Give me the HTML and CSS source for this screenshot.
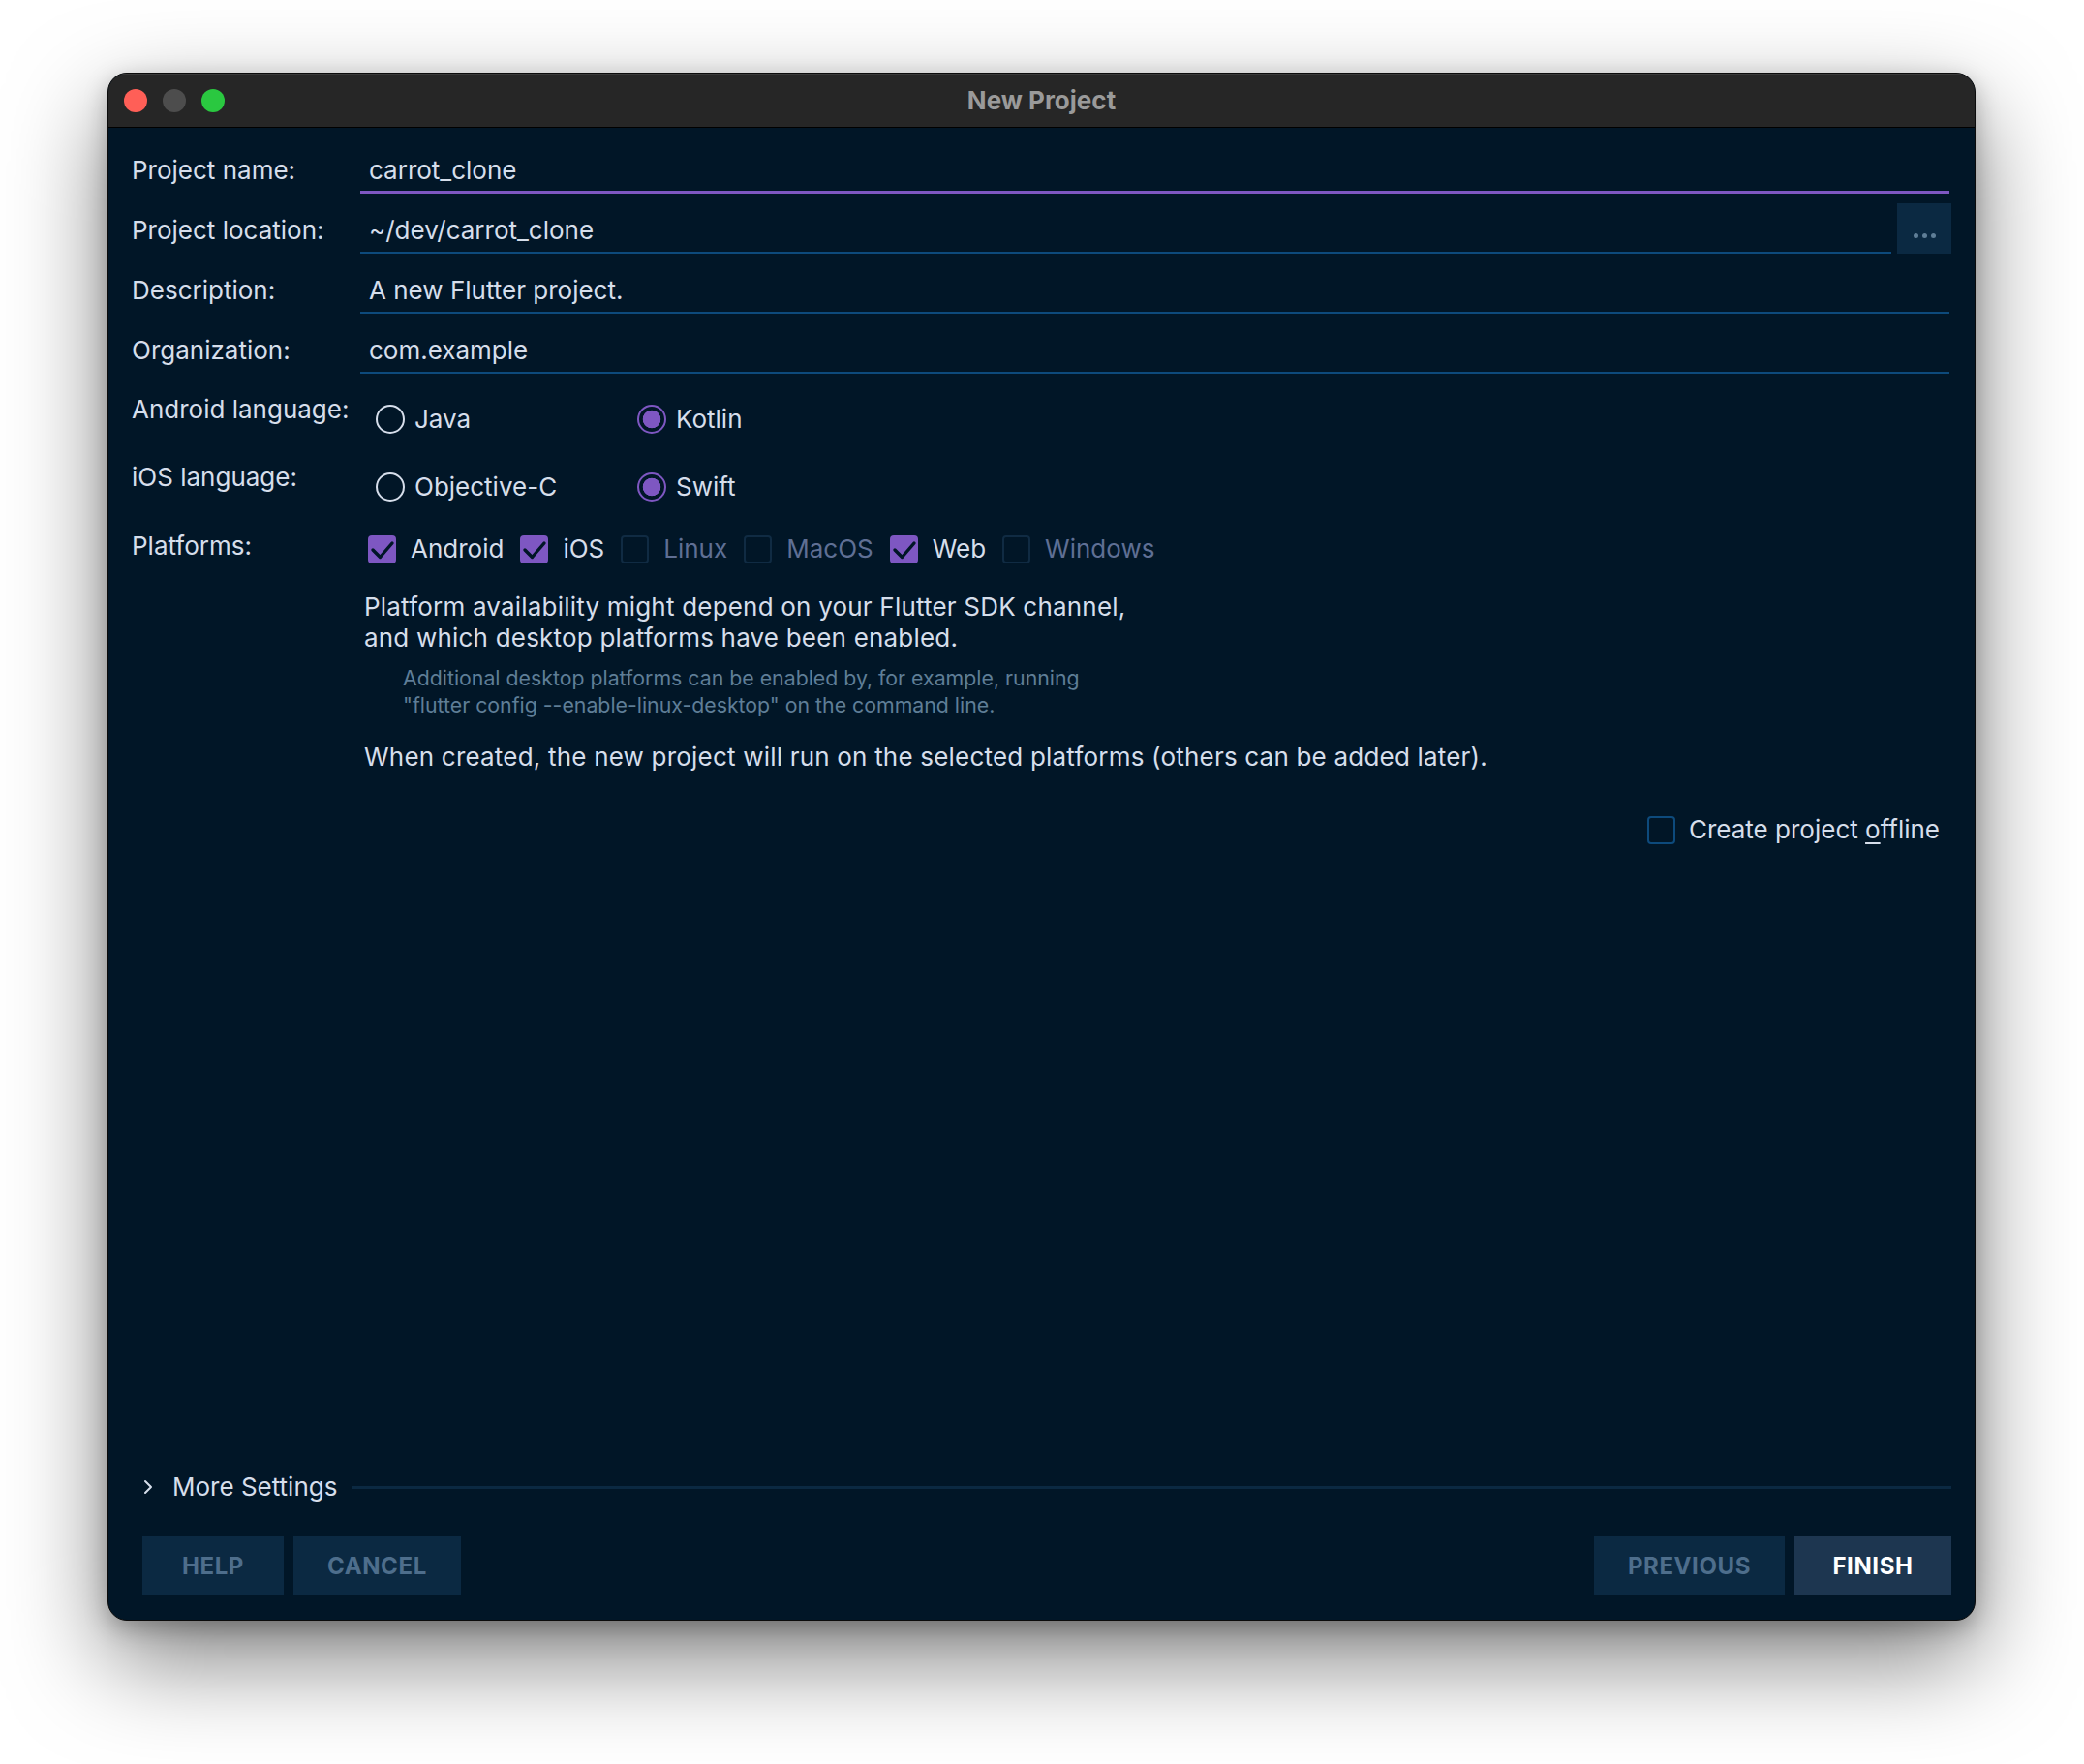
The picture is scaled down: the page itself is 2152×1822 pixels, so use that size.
FILE: index.html
```html
<!DOCTYPE html>
<html lang="en">
<head>
<meta charset="utf-8">
<title>New Project</title>
<link rel="stylesheet" href="styles.css">
</head>
<body>
<div class="window">
  <div class="titlebar">
    <div class="lights">
      <span class="light red"></span><span class="light gray"></span><span class="light green"></span>
    </div>
    <div class="title">New Project</div>
    <div></div>
  </div>
  <div class="content">
    <div class="form">
      <div class="row field-row">
        <div class="label">Project name:</div>
        <div class="field focused">carrot_clone</div>
      </div>
      <div class="row field-row">
        <div class="label">Project location:</div>
        <div class="field-group">
          <div class="field">~/dev/carrot_clone</div>
          <div class="browse"><span class="dot"></span><span class="dot"></span><span class="dot"></span></div>
        </div>
      </div>
      <div class="row field-row">
        <div class="label">Description:</div>
        <div class="field">A new Flutter project.</div>
      </div>
      <div class="row field-row">
        <div class="label">Organization:</div>
        <div class="field">com.example</div>
      </div>
      <div class="row option-row">
        <div class="label">Android language:</div>
        <div class="options">
          <div class="radio-item"><span class="radio"></span>Java</div>
          <div class="radio-item"><span class="radio on"></span>Kotlin</div>
        </div>
      </div>
      <div class="row option-row">
        <div class="label">iOS language:</div>
        <div class="options">
          <div class="radio-item"><span class="radio"></span>Objective-C</div>
          <div class="radio-item"><span class="radio on"></span>Swift</div>
        </div>
      </div>
      <div class="row platform-row">
        <div class="label">Platforms:</div>
        <div class="checks">
          <div class="check-item"><span class="checkbox on"><svg viewBox="0 0 29 29" width="29" height="29"><polyline points="5,15 12.5,22.5 25,8" fill="none" stroke="#011627" stroke-width="3.4" stroke-linecap="round" stroke-linejoin="round"/></svg></span>Android</div>
          <div class="check-item"><span class="checkbox on"><svg viewBox="0 0 29 29" width="29" height="29"><polyline points="5,15 12.5,22.5 25,8" fill="none" stroke="#011627" stroke-width="3.4" stroke-linecap="round" stroke-linejoin="round"/></svg></span>iOS</div>
          <div class="check-item disabled"><span class="checkbox"></span>Linux</div>
          <div class="check-item disabled"><span class="checkbox"></span>MacOS</div>
          <div class="check-item"><span class="checkbox on"><svg viewBox="0 0 29 29" width="29" height="29"><polyline points="5,15 12.5,22.5 25,8" fill="none" stroke="#011627" stroke-width="3.4" stroke-linecap="round" stroke-linejoin="round"/></svg></span>Web</div>
          <div class="check-item disabled"><span class="checkbox"></span>Windows</div>
        </div>
      </div>
      <div class="info">
        <p class="note">Platform availability might depend on your Flutter SDK channel,<br>and which desktop platforms have been enabled.</p>
        <p class="hint">Additional desktop platforms can be enabled by, for example, running<br>"flutter config --enable-linux-desktop" on the command line.</p>
        <p class="note after">When created, the new project will run on the selected platforms (others can be added later).</p>
      </div>
      <div class="offline">
        <span class="checkbox focus"></span>
        <span>Create project <span class="mnemonic">o</span>ffline</span>
      </div>
    </div>
    <div class="footer">
      <div class="more">
        <svg class="chevron" viewBox="0 0 10 16" width="10" height="16"><polyline points="2,2 8,8 2,14" fill="none" stroke="#d6deeb" stroke-width="2" stroke-linecap="round" stroke-linejoin="round"/></svg>
        <span>More Settings</span>
        <span class="sep"></span>
      </div>
      <div class="buttons">
        <button class="btn">HELP</button>
        <button class="btn">CANCEL</button>
        <span class="spacer"></span>
        <button class="btn">PREVIOUS</button>
        <button class="btn primary">FINISH</button>
      </div>
    </div>
  </div>
</div>
</body>
</html>
```

FILE: styles.css
```css
html, body {
  margin: 0;
  background: #ffffff;
}
body {
  padding: 75px 0 0 111px;
  height: 1822px;
  box-sizing: border-box;
  font-family: Inter, "Noto Sans", sans-serif;
  color: #d6deeb;
  font-size: 26px;
}
.window {
  width: 1929px;
  height: 1599px;
  box-sizing: border-box;
  border-radius: 20px;
  border: 1px solid #0b0b0b;
  background: #011627;
  box-shadow: 0 40px 100px rgba(0, 0, 0, 0.5), 0 8px 24px rgba(0, 0, 0, 0.25);
  display: flex;
  flex-direction: column;
  overflow: hidden;
}
.titlebar {
  flex: none;
  height: 56px;
  box-sizing: border-box;
  background: #262626;
  border-bottom: 1px solid #000;
  border-top: 1px solid #3a3a3a;
  display: grid;
  grid-template-columns: 1fr auto 1fr;
  align-items: center;
  padding: 0 16px 1px;
}
.lights {
  display: flex;
  gap: 16px;
}
.light {
  width: 24px;
  height: 24px;
  border-radius: 50%;
}
.light.red { background: #ff5f57; }
.light.gray { background: #4d4d4d; }
.light.green { background: #2ac840; }
.title {
  color: #9a9a9a;
  font-weight: 700;
  font-size: 26px;
}
.content {
  flex: 1;
  display: flex;
  flex-direction: column;
}
.form {
  padding: 6px 26px 0 24px;
}
.row {
  display: grid;
  grid-template-columns: 236px 1fr;
}
.label {
  line-height: 32px;
  padding-top: 22px;
  white-space: nowrap;
}
.field-row {
  height: 62px;
}
.field {
  height: 62px;
  box-sizing: border-box;
  padding: 22px 8px 0 9px;
  line-height: 32px;
  border-bottom: 2px solid #0d4a7c;
}
.field.focused {
  border-bottom: 3px solid #7e57c2;
}
.field-group {
  display: flex;
  align-items: flex-end;
  gap: 6px;
}
.field-group .field {
  flex: 1;
}
.browse {
  width: 56px;
  height: 52px;
  margin-right: -2px;
  background: #0b2942;
  display: flex;
  justify-content: center;
  align-items: flex-end;
  gap: 4px;
  padding-bottom: 16px;
  box-sizing: border-box;
}
.dot {
  width: 5px;
  height: 5px;
  border-radius: 50%;
  background: #5f7e97;
}
.option-row {
  height: 70px;
}
.option-row .label {
  padding-top: 21px;
}
.options {
  padding: 31px 0 0 16px;
  display: grid;
  grid-template-columns: 270px auto;
  align-content: start;
}
.radio-item {
  display: flex;
  align-items: center;
  gap: 10px;
  line-height: 32px;
}
.radio {
  width: 30px;
  height: 30px;
  box-sizing: border-box;
  border-radius: 50%;
  border: 2px solid #d6deeb;
}
.radio.on {
  border-color: #7e57c2;
  background: radial-gradient(circle, #7e57c2 0 9px, transparent 9.6px);
}
.platform-row .label {
  padding-top: 22px;
}
.checks {
  padding: 25px 0 0 8px;
  display: flex;
  gap: 17px;
  line-height: 32px;
}
.check-item {
  display: flex;
  align-items: center;
  gap: 15px;
}
.check-item.disabled {
  color: #5f6f94;
}
.checkbox {
  width: 29px;
  height: 29px;
  box-sizing: border-box;
  border-radius: 4px;
  border: 2px solid #102b43;
  display: block;
  flex: none;
}
.checkbox.on {
  border: none;
  background: #7e57c2;
}
.checkbox svg {
  display: block;
}
.checkbox.focus {
  border-color: #0d4a7c;
}
.info {
  margin: 28px 0 0 240px;
}
.note {
  margin: 0;
  line-height: 32px;
  letter-spacing: 0.2px;
}
.hint {
  margin: 11px 0 0 40px;
  font-size: 21.3px;
  line-height: 28px;
  color: #5f7e97;
}
.note.after {
  margin-top: 24px;
}
.offline {
  margin-top: 43px;
  display: flex;
  justify-content: flex-end;
  align-items: center;
  gap: 14px;
  padding-right: 10px;
  line-height: 32px;
}
.mnemonic {
  text-decoration: underline;
  text-underline-offset: 4px;
  text-decoration-thickness: 2px;
}
.footer {
  margin-top: auto;
  padding: 0 24px 26px 35px;
}
.more {
  display: flex;
  align-items: center;
  height: 32px;
  line-height: 32px;
}
.chevron {
  margin: 0 20px 0 1px;
  flex: none;
}
.sep {
  flex: 1;
  height: 3px;
  margin-left: 15px;
  background: #0b2942;
}
.buttons {
  display: flex;
  gap: 10px;
  margin-top: 35px;
}
.spacer {
  flex: 1;
}
.btn {
  height: 60px;
  min-width: 146px;
  padding: 0 35px;
  border: none;
  background: #0b2942;
  color: #4e6e8c;
  font-family: Inter, "Noto Sans", sans-serif;
  font-weight: 700;
  font-size: 24px;
  letter-spacing: 0.6px;
  cursor: default;
}
.btn.primary {
  min-width: 162px;
  background: #1d3650;
  color: #ffffff;
}
```
